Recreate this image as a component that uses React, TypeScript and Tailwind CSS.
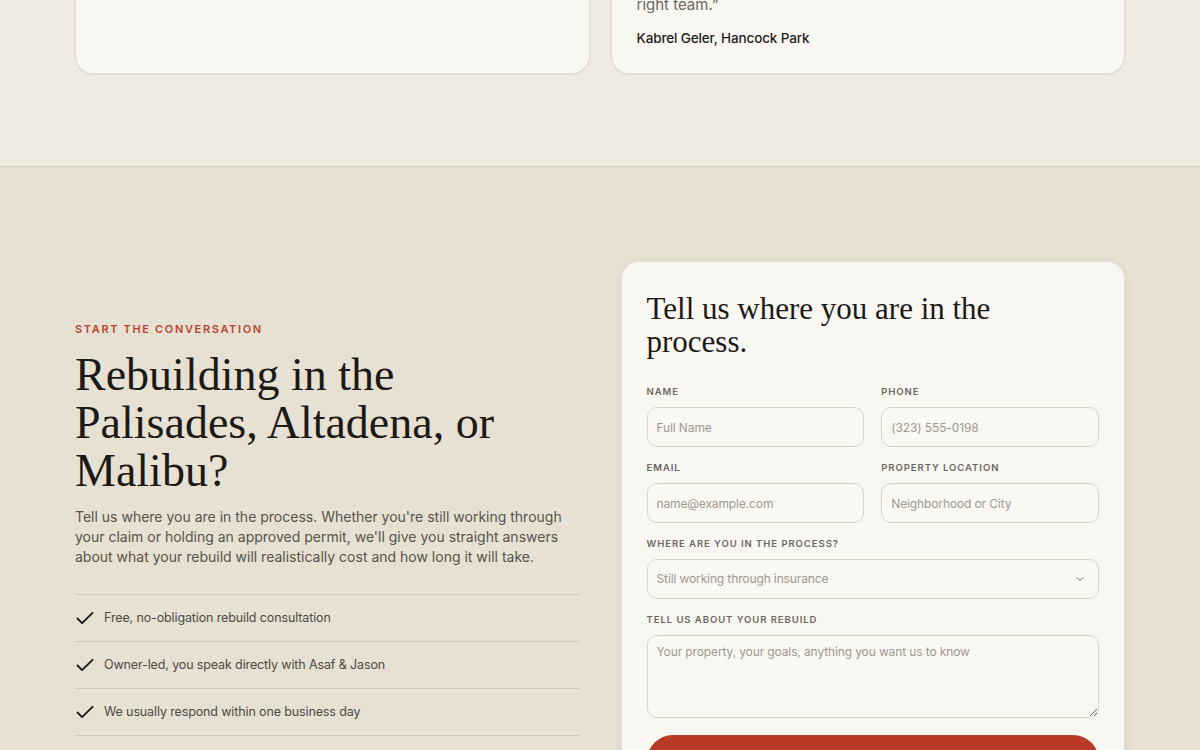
import React from "react";

const serif = { fontFamily: '"Liberation Serif", "DejaVu Serif", serif' };

function Check() {
  return (
    <svg width="20" height="20" viewBox="0 0 20 20" fill="none" stroke="#1c1b18" strokeWidth="1.9" strokeLinecap="round" strokeLinejoin="round">
      <path d="M2.5 10.5l4.6 4.6L17.5 4.8" />
    </svg>
  );
}

function Label({ children }: { children: React.ReactNode }) {
  return (
    <div className="text-[9.5px] leading-[14px] font-semibold tracking-[0.1em] uppercase text-[#6b675f] mb-2">
      {children}
    </div>
  );
}

function Input({ placeholder }: { placeholder: string }) {
  return (
    <input
      placeholder={placeholder}
      className="w-full h-10 rounded-[10px] border border-[#d9d4c8] bg-[#faf8f3] px-[9px] text-[12px] tracking-[-0.01em] text-[#333] placeholder:text-[#9d998f] outline-none"
    />
  );
}

export default function App() {
  return (
    <div className="min-h-screen bg-[#e7e1d3]" style={{ fontFamily: 'Inter, "Liberation Sans", sans-serif' }}>
      {/* top testimonials */}
      <section className="bg-[#efebe1] border-b border-[#d9d3c6] h-[167px]">
        <div className="mx-auto w-[1050px] grid grid-cols-2 gap-[21px]">
          <div className="h-[74px] rounded-b-[18px] border border-t-0 border-[#e2ddd1] bg-[#f9f7f2] shadow-[0_1px_2px_rgba(0,0,0,0.05)]" />
          <div className="h-[74px] rounded-b-[18px] border border-t-0 border-[#e2ddd1] bg-[#f9f7f2] shadow-[0_1px_2px_rgba(0,0,0,0.05)] px-[25px] overflow-hidden">
            <p className="-mt-[7px] text-[15px] leading-6 text-[#6b675f]">right team.”</p>
            <p className="mt-[11px] text-[13.5px] tracking-[-0.01em] leading-5 font-medium text-[#1f1e1b]">Kabrel Geler, Hancock Park</p>
          </div>
        </div>
      </section>

      {/* contact */}
      <section className="pt-[94px] pb-16">
        <div className="mx-auto w-[1050px] grid grid-cols-2 gap-[41px] items-start">
          <div className="pt-[61px]">
            <div className="text-[11px] leading-[14px] font-semibold tracking-[0.15em] text-[#b8442d]">
              START THE CONVERSATION
            </div>
            <h2 className="mt-[15px] text-[46px] leading-[48px] text-[#1c1a16]" style={serif}>
              Rebuilding in the Palisades, Altadena, or Malibu?
            </h2>
            <p className="mt-[12px] text-[14px] leading-5 text-[#57534b]">
              Tell us where you are in the process. Whether you're still working through your claim or holding an
              approved permit, we'll give you straight answers about what your rebuild will realistically cost and how
              long it will take.
            </p>
            <ul className="mt-[27px] border-t border-[#cfc9bb]">
              {[
                "Free, no-obligation rebuild consultation",
                "Owner-led, you speak directly with Asaf & Jason",
                "We usually respond within one business day",
              ].map((t) => (
                <li key={t} className="flex items-center gap-[9px] h-[47px] border-b border-[#cfc9bb]">
                  <Check />
                  <span className="text-[12.5px] tracking-[-0.01em] text-[#4e4a43]">{t}</span>
                </li>
              ))}
            </ul>
          </div>

          <div className="rounded-[18px] border border-[#e4dfd3] bg-[#f9f7f2] shadow-[0_2px_10px_rgba(60,50,30,0.06)] px-[25px] pt-[30px] pb-[26px]">
            <h3 className="text-[31px] leading-[33px] text-[#1c1a16] max-w-[400px]" style={serif}>
              Tell us where you are in the process.
            </h3>
            <div className="mt-[27px] grid grid-cols-2 gap-x-[17px] gap-y-[14px]">
              <div>
                <Label>Name</Label>
                <Input placeholder="Full Name" />
              </div>
              <div>
                <Label>Phone</Label>
                <Input placeholder="(323) 555-0198" />
              </div>
              <div>
                <Label>Email</Label>
                <Input placeholder="name@example.com" />
              </div>
              <div>
                <Label>Property Location</Label>
                <Input placeholder="Neighborhood or City" />
              </div>
              <div className="col-span-2">
                <Label>Where are you in the process?</Label>
                <div className="flex items-center justify-between h-10 rounded-[10px] border border-[#d9d4c8] bg-[#faf8f3] px-[9px] pr-[12px]">
                  <span className="text-[12px] tracking-[-0.01em] text-[#9d998f]">Still working through insurance</span>
                  <svg width="12" height="12" viewBox="0 0 24 24" fill="none" stroke="#77736a" strokeWidth="2" strokeLinecap="round" strokeLinejoin="round">
                    <path d="M6 9l6 6 6-6" />
                  </svg>
                </div>
              </div>
              <div className="col-span-2">
                <Label>Tell us about your rebuild</Label>
                <textarea
                  placeholder="Your property, your goals, anything you want us to know"
                  className="block w-full h-[83px] rounded-[10px] border border-[#d9d4c8] bg-[#faf8f3] px-[9px] py-[6px] text-[12px] tracking-[-0.01em] leading-5 placeholder:text-[#9d998f] outline-none"
                />
              </div>
            </div>
            <button className="mt-[17px] w-full h-[52px] rounded-full bg-[#b83a27] text-white text-[15px] font-semibold">
              Request a Consultation
            </button>
          </div>
        </div>
      </section>
    </div>
  );
}
